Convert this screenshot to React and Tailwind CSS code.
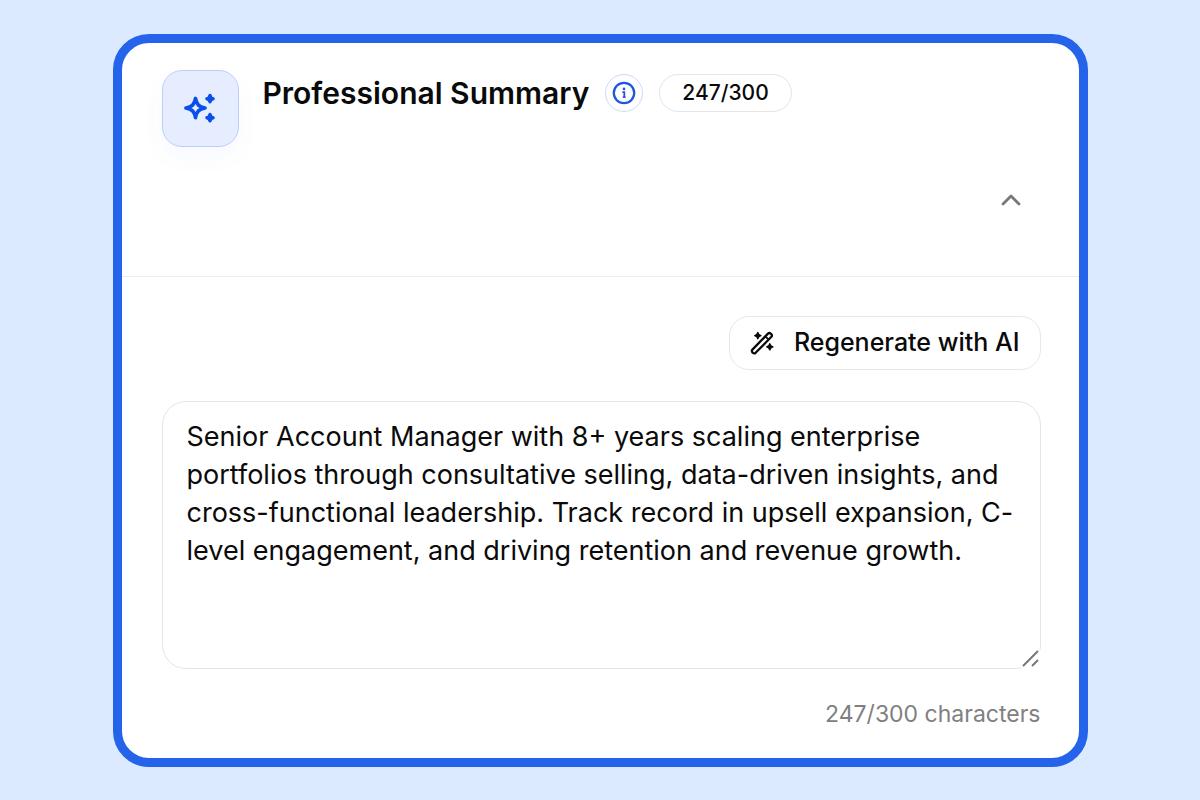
import { useState } from 'react'

const LIMIT = 300
const INITIAL_COUNT = 247

const INITIAL_TEXT =
  'Senior Account Manager with 8+ years scaling enterprise portfolios through consultative selling, data-driven insights, and cross-functional leadership. Track record in upsell expansion, C-level engagement, and driving retention and revenue growth.'

function SparklesIcon() {
  return (
    <svg viewBox="0 0 36 36" className="size-9" fill="none" aria-hidden="true">
      <path
        d="M13.5 8.4C14.6 14.6 16.9 16.9 23.1 18C16.9 19.1 14.6 21.4 13.5 27.6C12.4 21.4 10.1 19.1 3.9 18C10.1 16.9 12.4 14.6 13.5 8.4Z"
        stroke="currentColor" strokeWidth="3.6" strokeLinejoin="round"
      />
      <path
        d="M28 5.6L29 7.7L31.1 8.7L29 9.7L28 11.8L27 9.7L24.9 8.7L27 7.7ZM28 24.6L29 26.7L31.1 27.7L29 28.7L28 30.8L27 28.7L24.9 27.7L27 26.7Z"
        fill="currentColor" stroke="currentColor" strokeWidth="3.4" strokeLinejoin="round"
      />
    </svg>
  )
}

function InfoIcon() {
  return (
    <svg viewBox="0 0 24 24" className="size-6" fill="none" aria-hidden="true">
      <circle cx="12" cy="12" r="10.2" stroke="currentColor" strokeWidth="2.3" />
      <circle cx="12" cy="7.9" r="1.3" fill="currentColor" />
      <path d="M10.4 11.2H12.3V16.6M10.8 16.2H13.6" stroke="currentColor" strokeWidth="1.8" />
    </svg>
  )
}

function WandIcon() {
  return (
    <svg viewBox="0 0 24 24" className="size-6" fill="none" stroke="currentColor" strokeWidth="2.3" strokeLinejoin="round" aria-hidden="true">
      <path d="M2.4 18.6L18 2.6Q19.4 1.4 21 2.8Q22.6 4.4 21.4 5.8L5.6 21.8Q4.2 23 2.7 21.6Q1.2 20 2.4 18.6Z" />
      <path d="M15.6 5.6L18.4 8.4" strokeWidth="1.8" />
      <path d="M7.8 1.6L8.8 3.6L10.8 4.6L8.8 5.6L7.8 7.6L6.8 5.6L4.8 4.6L6.8 3.6ZM19.8 12.8L20.8 14.8L22.8 15.8L20.8 16.8L19.8 18.8L18.8 16.8L16.8 15.8L18.8 14.8Z" fill="currentColor" strokeWidth="1.5" />
    </svg>
  )
}

function ChevronIcon() {
  return (
    <svg viewBox="0 0 24 24" className="size-6" fill="none" stroke="currentColor" strokeWidth="2.8" strokeLinecap="round" strokeLinejoin="round" aria-hidden="true">
      <path d="M4 16L12 8L20 16" />
    </svg>
  )
}

export default function App() {
  const [open, setOpen] = useState(true)
  const [text, setText] = useState(INITIAL_TEXT)

  const count = INITIAL_COUNT + text.length - INITIAL_TEXT.length

  return (
    <main className="min-h-screen flex items-center justify-center bg-[#dbeafe] p-6 font-['Inter',sans-serif] text-[#0a0a0a]">
      <section className="w-full max-w-[975px] rounded-[36px] border-[9px] border-[#2563eb] bg-white">

        {/* Header */}
        <header className="border-b border-[#ededed] pl-10 pr-[38px] pt-[27px] pb-16">
          <div className="flex items-start gap-6">
            <div className="flex size-[77px] items-center justify-center rounded-[20px] border border-[#bccffb] bg-[#e6edfe] text-[#0a4fea] shadow-[0_10px_24px_rgba(37,99,235,0.04)]">
              <SparklesIcon />
            </div>
            <div className="flex items-center gap-4 pt-1">
              <h1 className="text-[30px] leading-[38px] font-semibold">Professional Summary</h1>
              <button
                type="button"
                aria-label="About this section"
                className="flex size-[38px] items-center justify-center rounded-full border border-[#ccdafc] text-[#1d56df]"
              >
                <InfoIcon />
              </button>
              <span className="flex h-[38px] items-center rounded-full border border-[#e5e5e5] px-[22px] text-[21px] font-medium">
                {count}/{LIMIT}
              </span>
            </div>
          </div>
          <div className="flex justify-end pt-[41px] pr-[18px]">
            <button
              type="button"
              aria-label={open ? 'Collapse' : 'Expand'}
              aria-expanded={open}
              onClick={() => setOpen(!open)}
              className="text-[#777777]"
            >
              <ChevronIcon />
            </button>
          </div>
        </header>

        {/* Editor */}
        {open && (
          <div className="flex flex-col pl-10 pr-[38px] pt-[39px] pb-[25px]">
            <button
              type="button"
              className="flex h-[54px] items-center gap-5 self-end rounded-[20px] border border-[#e8e8e8] px-5 text-[25px] font-medium"
            >
              <WandIcon />
              Regenerate with AI
            </button>

            <div className="relative mt-[31px]">
              <textarea
                aria-label="Professional summary"
                value={text}
                onChange={e => setText(e.target.value)}
                className="block h-[268px] w-full resize-none rounded-3xl border border-[#e5e5e5] px-6 py-4 text-[27px] leading-[38px] outline-none"
              />
              <svg viewBox="0 0 20 20" className="pointer-events-none absolute right-0 bottom-0 size-5" aria-hidden="true">
                <path d="M0 20L19 1L20 10L10 20Z" fill="white" />
                <path d="M2 17L17 2M11 17L17 11" stroke="#777777" strokeWidth="2" fill="none" />
              </svg>
            </div>

            <p className="mt-[26px] text-right text-[23px] leading-[38px] text-[#808080]">
              {count}/{LIMIT} characters
            </p>
          </div>
        )}
      </section>
    </main>
  )
}
